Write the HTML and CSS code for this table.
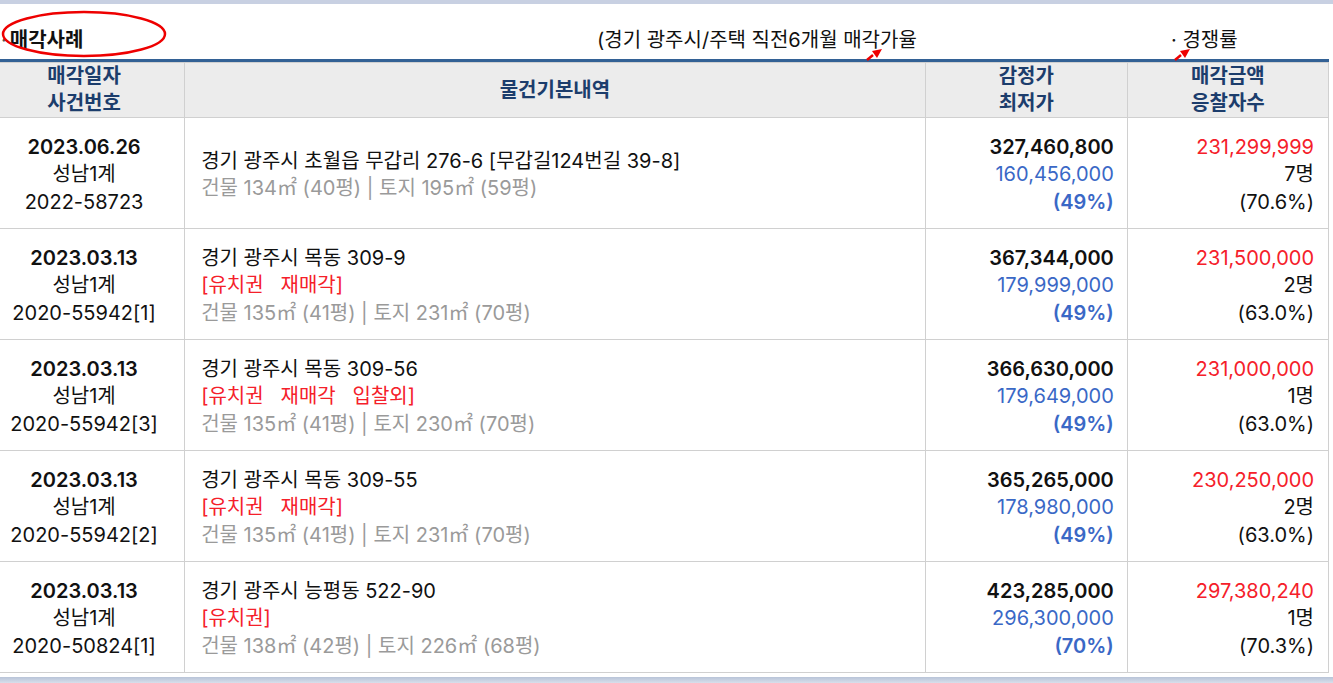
FILE: index.html
```html
<!DOCTYPE html>
<html lang="ko">
<head>
  <meta charset="UTF-8" />
  <title>매각사례</title>
  <link rel="stylesheet" href="styles.css">
</head>
<body>
  <div class="topband"></div>
  <div class="titlebar">
    <div class="title"><span class="dot">·</span>매각사례</div>
    <div class="ratio">(경기 광주시/주택 직전6개월 매각가율</div>
    <div class="compete">· 경쟁률</div>
    <svg class="ring" width="168" height="50" viewBox="0 0 168 50"><ellipse cx="84" cy="25" rx="81" ry="22" fill="none" stroke="#e00" stroke-width="2.5"/></svg>
    <svg class="mark m1" width="20" height="14" viewBox="0 0 20 14"><path d="M3 12 L9 7" stroke="#e00" stroke-width="2.5"/><path d="M8 3 L18 1 L13 10 Z" fill="#e00"/></svg>
    <svg class="mark m2" width="20" height="14" viewBox="0 0 20 14"><path d="M3 12 L9 7" stroke="#e00" stroke-width="2.5"/><path d="M8 3 L18 1 L13 10 Z" fill="#e00"/></svg>
  </div>

  <table class="sales">
    <thead>
      <tr>
        <th class="c1">매각일자<br>사건번호</th>
        <th class="c2">물건기본내역</th>
        <th class="c3">감정가<br>최저가</th>
        <th class="c4">매각금액<br>응찰자수</th>
      </tr>
    </thead>
    <tbody>
      <tr>
        <td class="c1"><b>2023.06.26</b><br>성남1계<br>2022-58723</td>
        <td class="c2">경기 광주시 초월읍 무갑리 276-6 [무갑길124번길 39-8]<br><span class="gray">건물 134㎡ (40평) | 토지 195㎡ (59평)</span></td>
        <td class="c3"><b>327,460,800</b><br><span class="blue">160,456,000<br><b>(49%)</b></span></td>
        <td class="c4"><span class="red">231,299,999</span><br>7명<br>(70.6%)</td>
      </tr>
      <tr>
        <td class="c1"><b>2023.03.13</b><br>성남1계<br>2020-55942[1]</td>
        <td class="c2">경기 광주시 목동 309-9<br><span class="red">[유치권&nbsp;&nbsp;&nbsp;재매각]</span><br><span class="gray">건물 135㎡ (41평) | 토지 231㎡ (70평)</span></td>
        <td class="c3"><b>367,344,000</b><br><span class="blue">179,999,000<br><b>(49%)</b></span></td>
        <td class="c4"><span class="red">231,500,000</span><br>2명<br>(63.0%)</td>
      </tr>
      <tr>
        <td class="c1"><b>2023.03.13</b><br>성남1계<br>2020-55942[3]</td>
        <td class="c2">경기 광주시 목동 309-56<br><span class="red">[유치권&nbsp;&nbsp;&nbsp;재매각&nbsp;&nbsp;&nbsp;입찰외]</span><br><span class="gray">건물 135㎡ (41평) | 토지 230㎡ (70평)</span></td>
        <td class="c3"><b>366,630,000</b><br><span class="blue">179,649,000<br><b>(49%)</b></span></td>
        <td class="c4"><span class="red">231,000,000</span><br>1명<br>(63.0%)</td>
      </tr>
      <tr>
        <td class="c1"><b>2023.03.13</b><br>성남1계<br>2020-55942[2]</td>
        <td class="c2">경기 광주시 목동 309-55<br><span class="red">[유치권&nbsp;&nbsp;&nbsp;재매각]</span><br><span class="gray">건물 135㎡ (41평) | 토지 231㎡ (70평)</span></td>
        <td class="c3"><b>365,265,000</b><br><span class="blue">178,980,000<br><b>(49%)</b></span></td>
        <td class="c4"><span class="red">230,250,000</span><br>2명<br>(63.0%)</td>
      </tr>
      <tr>
        <td class="c1"><b>2023.03.13</b><br>성남1계<br>2020-50824[1]</td>
        <td class="c2">경기 광주시 능평동 522-90<br><span class="red">[유치권]</span><br><span class="gray">건물 138㎡ (42평) | 토지 226㎡ (68평)</span></td>
        <td class="c3"><b>423,285,000</b><br><span class="blue">296,300,000<br><b>(70%)</b></span></td>
        <td class="c4"><span class="red">297,380,240</span><br>1명<br>(70.3%)</td>
      </tr>
    </tbody>
  </table>
  <div class="bottomband"></div>
</body>
</html>
```

FILE: styles.css
```css
body {
  margin: 0;
  font-family: Inter, "Noto Sans CJK KR", sans-serif;
  font-size: 20px;
  color: #111;
  background: #fff;
  width: 1333px;
  overflow: hidden;
}
b { font-weight: 600; }
.topband { height: 4px; background: #c8d0e2; }
.titlebar {
  position: relative;
  height: 55px;
  width: 1329px;
  border-bottom: 3px solid #336195;
  display: flex;
  align-items: center;
}
.title { font-weight: bold; width: 596px; margin-top: 14px; padding-left: 1px; }
.title .dot { font-weight: normal; color: #555; margin-right: 3px; }
.ratio { width: 574px; margin-top: 14px; }
.compete { margin-top: 14px; }
.ring { position: absolute; left: 0; top: 5px; }
.mark { position: absolute; top: 44px; }
.m1 { left: 864px; }
.m2 { left: 1172px; }

.sales {
  border-collapse: collapse;
  width: 1329px;
  table-layout: fixed;
  line-height: 27.5px;
}
.sales th, .sales td {
  border: 1px solid #d0d0d0;
  vertical-align: middle;
  padding: 0;
}
.sales tr > :first-child { border-left: none; }
.sales th {
  background: #ececec;
  color: #1c3d6c;
  font-weight: bold;
  height: 54px;
  line-height: 27px;
}
th.c1 { width: 168px; }
th.c2 { width: 739px; }
th.c3 { width: 201px; }
th.c4 { width: 200px; }
.sales td { height: 106px; padding-top: 4px; }
.c1 { text-align: center; }
th.c1, td.c1 { padding-right: 16px; }
td.c2 { padding-left: 16px; }
td.c3 { text-align: right; padding-right: 13px; }
td.c4 { text-align: right; padding-right: 14px; }
th.c3, th.c4, th.c2 { text-align: center; }
.gray { color: #9a9a9a; }
.blue { color: #3a68c6; }
.red { color: #f5202a; }
.bottomband {
  margin-top: 4px;
  height: 6px;
  background: linear-gradient(#b8c4d8, #d8dfeb);
}
```
